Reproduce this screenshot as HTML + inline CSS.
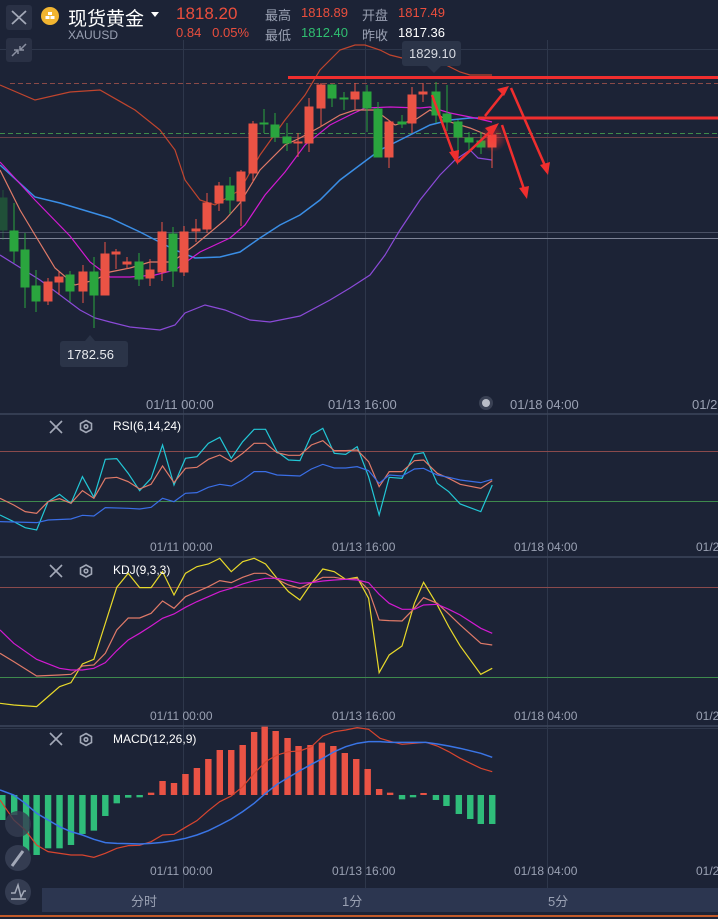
<!DOCTYPE html>
<html><head><meta charset="utf-8"><style>
*{margin:0;padding:0;box-sizing:border-box}
body{width:718px;height:919px;background:#1c2336;overflow:hidden;position:relative;font-family:"Liberation Sans","Noto Sans CJK SC",sans-serif;color:#fff}
.abs{position:absolute;white-space:nowrap}
.lbl{font-size:13px;color:#9aa1b3}
.gray{color:#9aa1b3}
.red{color:#ea4e3d}
.grn{color:#2fbf71}
</style></head><body>
<svg class="abs" style="left:0;top:0" width="718" height="919" viewBox="0 0 718 919">
<defs><radialGradient id="gl"><stop offset="0" stop-color="#ff3030" stop-opacity=".6"/><stop offset="1" stop-color="#ff3030" stop-opacity="0"/></radialGradient></defs>
<!-- grid -->
<g stroke="#2e374b" stroke-width="1">
<line x1="0" y1="49.5" x2="718" y2="49.5"/>
<line x1="183.5" y1="40" x2="183.5" y2="890"/>
<line x1="365.5" y1="40" x2="365.5" y2="890"/>
<line x1="547.5" y1="40" x2="547.5" y2="890"/>
<line x1="0" y1="728.5" x2="718" y2="728.5"/>
</g>
<g stroke="#3d465b" stroke-width="1.5">
<line x1="0" y1="414" x2="718" y2="414"/>
<line x1="0" y1="557" x2="718" y2="557"/>
<line x1="0" y1="726" x2="718" y2="726"/>
</g>
<!-- main horizontal lines -->
<line x1="10" y1="83.5" x2="718" y2="83.5" stroke="#8a4a48" stroke-dasharray="5,3"/>
<line x1="0" y1="133.5" x2="718" y2="133.5" stroke="#3f8a4b" stroke-dasharray="5,3"/>
<line x1="0" y1="137.5" x2="718" y2="137.5" stroke="#6b4048"/>
<line x1="0" y1="232.5" x2="718" y2="232.5" stroke="#4a5165"/>
<line x1="0" y1="238.5" x2="718" y2="238.5" stroke="#7d8396"/>
<!-- bands -->
<g fill="none" stroke-width="1.2">
<polyline stroke="#c0452e" points="0,85 35,100 70,92 100,90 135,110 160,130 175,150 185,180 200,200 215,205 240,190 260,155 285,120 305,95 320,70 340,50 355,45 365,45 380,50 390,55 410,60 440,62 460,72 470,75 492,75"/>
<polyline stroke="#8b4ad8" points="0,255 40,280 80,310 95,318 110,322 130,327 160,330 175,325 185,313 205,305 225,310 250,320 270,322 300,316 330,300 350,288 370,275 385,255 400,230 420,200 440,175 455,160 470,150 478,158 492,160"/>
<polyline stroke="#3a8ee6" stroke-width="1.5" points="0,165 35,197 60,203 90,212 110,218 140,232 175,250 195,258 220,257 240,252 260,238 280,225 300,215 320,200 340,180 360,165 380,150 400,140 430,125 450,120 470,118 492,118"/>
<polyline stroke="#d21ad2" points="0,162 35,200 70,236 90,262 110,277 130,277 155,275 175,270 200,252 230,238 245,225 265,195 285,172 305,145 330,125 350,115 365,108 390,107 420,108 430,107 450,113 475,118 492,122"/>
<polyline stroke="#e07a68" points="0,170 20,210 35,235 55,268 75,285 95,280 110,272 130,268 150,262 172,262 195,245 225,220 240,203 260,170 285,145 300,138 320,127 340,115 355,110 375,110 395,125 415,120 430,110 450,122 470,128 492,137"/>
</g>
<!-- candles -->
<g stroke-width="1">
<g stroke="#2aa53e" fill="#2aa53e" opacity=".35"><line x1="3" y1="190" x2="3" y2="240"/><rect x="-1" y="198" width="8" height="32"/></g>
<g stroke="#2aa53e" fill="#2aa53e">
<line x1="14" y1="203" x2="14" y2="263"/><rect x="10" y="231" width="8" height="20"/>
<line x1="25" y1="233" x2="25" y2="308"/><rect x="21" y="250" width="8" height="37"/>
<line x1="36" y1="270" x2="36" y2="312"/><rect x="32" y="286" width="8" height="15"/>
<line x1="70" y1="271" x2="70" y2="302"/><rect x="66" y="275" width="8" height="16"/>
<line x1="94" y1="257" x2="94" y2="328"/><rect x="90" y="272" width="8" height="23"/>
<line x1="139" y1="253" x2="139" y2="286"/><rect x="135" y="262" width="8" height="17"/>
<line x1="173" y1="227" x2="173" y2="287"/><rect x="169" y="234" width="8" height="37"/>
<line x1="230" y1="177" x2="230" y2="214"/><rect x="226" y="186" width="8" height="14"/>
<line x1="264" y1="109" x2="264" y2="133"/><rect x="260" y="123" width="8" height="1"/>
<line x1="275" y1="113" x2="275" y2="142"/><rect x="271" y="125" width="8" height="12"/>
<line x1="287" y1="123" x2="287" y2="151"/><rect x="283" y="137" width="8" height="6"/>
<line x1="332" y1="84" x2="332" y2="107"/><rect x="328" y="85" width="8" height="13"/>
<line x1="344" y1="92" x2="344" y2="110"/><rect x="340" y="98" width="8" height="1"/>
<line x1="367" y1="85" x2="367" y2="132"/><rect x="363" y="92" width="8" height="16"/>
<line x1="378" y1="102" x2="378" y2="157"/><rect x="374" y="109" width="8" height="48"/>
<line x1="402" y1="115" x2="402" y2="128"/><rect x="398" y="122" width="8" height="2"/>
<line x1="436" y1="82" x2="436" y2="123"/><rect x="432" y="92" width="8" height="23"/>
<line x1="447" y1="85" x2="447" y2="131"/><rect x="443" y="114" width="8" height="8"/>
<line x1="458" y1="120" x2="458" y2="163"/><rect x="454" y="122" width="8" height="15"/>
<line x1="469" y1="132" x2="469" y2="150"/><rect x="465" y="138" width="8" height="4"/>
<line x1="481" y1="132" x2="481" y2="154"/><rect x="477" y="141" width="8" height="6"/>
</g>
<g stroke="#ea5345" fill="#ea5345">
<line x1="48" y1="278" x2="48" y2="305"/><rect x="44" y="282" width="8" height="19"/>
<line x1="59" y1="272" x2="59" y2="295"/><rect x="55" y="277" width="8" height="5"/>
<line x1="83" y1="265" x2="83" y2="303"/><rect x="79" y="272" width="8" height="19"/>
<line x1="105" y1="242" x2="105" y2="295"/><rect x="101" y="254" width="8" height="41"/>
<line x1="116" y1="249" x2="116" y2="269"/><rect x="112" y="252" width="8" height="2"/>
<line x1="127" y1="257" x2="127" y2="269"/><rect x="123" y="262" width="8" height="2"/>
<line x1="150" y1="259" x2="150" y2="286"/><rect x="146" y="270" width="8" height="8"/>
<line x1="162" y1="222" x2="162" y2="281"/><rect x="158" y="232" width="8" height="40"/>
<line x1="184" y1="226" x2="184" y2="276"/><rect x="180" y="232" width="8" height="40"/>
<line x1="196" y1="219" x2="196" y2="242"/><rect x="192" y="229" width="8" height="2"/>
<line x1="207" y1="193" x2="207" y2="233"/><rect x="203" y="203" width="8" height="26"/>
<line x1="219" y1="182" x2="219" y2="211"/><rect x="215" y="186" width="8" height="17"/>
<line x1="241" y1="170" x2="241" y2="226"/><rect x="237" y="172" width="8" height="29"/>
<line x1="253" y1="121" x2="253" y2="182"/><rect x="249" y="124" width="8" height="49"/>
<line x1="298" y1="133" x2="298" y2="157"/><rect x="294" y="142" width="8" height="1"/>
<line x1="309" y1="98" x2="309" y2="152"/><rect x="305" y="107" width="8" height="36"/>
<line x1="321" y1="83" x2="321" y2="127"/><rect x="317" y="85" width="8" height="23"/>
<line x1="355" y1="83" x2="355" y2="109"/><rect x="351" y="92" width="8" height="7"/>
<line x1="389" y1="120" x2="389" y2="168"/><rect x="385" y="122" width="8" height="35"/>
<line x1="412" y1="87" x2="412" y2="133"/><rect x="408" y="95" width="8" height="28"/>
<line x1="423" y1="83" x2="423" y2="102"/><rect x="419" y="92" width="8" height="2"/>
<line x1="492" y1="130" x2="492" y2="168"/><rect x="488" y="135" width="8" height="12"/>
</g>
</g>
<circle cx="493" cy="138" r="14" fill="url(#gl)"/>
<!-- red drawings -->
<g stroke="#f02e2e" fill="#f02e2e">
<rect x="288" y="76" width="430" height="3" stroke="none"/>
<rect x="478" y="116.5" width="240" height="3" stroke="none"/>
<g stroke-width="2.5" fill="none">
<line x1="432" y1="95" x2="455" y2="158"/>
<line x1="458" y1="162" x2="494" y2="128"/>
<line x1="485" y1="116" x2="505" y2="91"/>
<line x1="511" y1="88" x2="546" y2="168"/>
<line x1="502" y1="125" x2="525" y2="192"/>
</g>
<polygon points="458,165 449,152 459,150" stroke="none"/>
<polygon points="499,123 485,128 492,136" stroke="none"/>
<polygon points="509,86 497,89 504,96" stroke="none"/>
<polygon points="548,175 540,165 550,162" stroke="none"/>
<polygon points="527,199 519,188 529,186" stroke="none"/>
</g>
<!-- tooltips -->
<rect x="402" y="41" width="59" height="25" rx="3" fill="#2b3448"/>
<polygon points="427,66 441,66 434,73" fill="#2b3448"/>
<rect x="60" y="341" width="68" height="26" rx="3" fill="#2b3448"/>
<polygon points="85,341 95,341 90,335" fill="#2b3448"/>
<circle cx="486" cy="403" r="7" fill="#3a4154"/><circle cx="486" cy="403" r="4" fill="#b9bdc7"/>

<!-- RSI -->
<line x1="0" y1="451.5" x2="718" y2="451.5" stroke="#8a4a4c"/>
<line x1="0" y1="501.5" x2="718" y2="501.5" stroke="#3e8a4d"/>
<g transform="translate(0,390) scale(0.4579,0.3333)" fill="none" stroke-width="1.2">
<polyline vector-effect="non-scaling-stroke" stroke="#22c7d6" points="0,375 30,395 55,413 80,420 105,335 130,313 155,340 180,260 205,322 230,208 255,206 280,250 305,302 330,265 355,165 380,285 405,205 430,200 455,160 480,142 505,205 530,155 555,118 580,118 605,185 630,210 655,212 680,135 705,115 730,190 755,193 780,170 805,260 828,375 850,262 878,265 905,193 925,188 955,280 980,305 1005,342 1050,365 1075,285"/>
<polyline vector-effect="non-scaling-stroke" stroke="#e07a68" points="0,325 30,345 55,365 80,370 105,335 130,326 155,340 180,302 205,325 230,265 255,262 280,275 305,297 330,283 355,228 380,278 405,235 430,232 455,208 480,195 505,215 530,190 555,160 580,160 605,188 630,196 655,196 680,165 705,152 730,182 755,182 780,180 805,215 828,290 850,245 878,245 905,212 925,210 955,250 980,265 1005,283 1050,295 1075,272"/>
<polyline vector-effect="non-scaling-stroke" stroke="#3a6ee6" points="0,395 80,398 105,390 155,387 180,376 205,378 230,353 280,355 305,357 330,352 355,325 380,335 405,310 430,308 455,292 480,283 505,288 530,270 555,245 580,245 605,255 655,258 680,237 705,223 730,234 755,234 780,230 805,242 828,280 850,255 878,258 905,237 925,235 955,255 980,262 1005,270 1050,278 1075,268"/>
</g>
<!-- KDJ -->
<line x1="0" y1="587.5" x2="718" y2="587.5" stroke="#8a4a4c"/>
<line x1="0" y1="677.5" x2="718" y2="677.5" stroke="#3e8a4d"/>
<g transform="translate(0,390) scale(0.4579,0.3333)" fill="none" stroke-width="1.2">
<polyline vector-effect="non-scaling-stroke" stroke="#e8d92a" points="0,940 30,945 80,950 105,920 130,890 155,878 180,822 205,808 230,700 255,592 280,550 305,593 330,593 355,545 380,615 405,550 430,530 455,522 480,505 505,545 530,515 555,505 580,522 605,565 630,605 655,630 680,580 705,537 730,545 755,568 780,562 805,625 828,848 850,795 878,768 905,640 925,577 955,645 980,710 1005,768 1050,853 1075,835"/>
<polyline vector-effect="non-scaling-stroke" stroke="#e07a68" points="0,790 30,815 80,858 130,855 155,853 180,828 205,825 230,790 255,720 280,684 305,684 330,670 355,633 380,655 405,620 430,605 455,590 480,572 505,578 530,562 555,550 580,550 605,568 630,585 655,595 680,578 705,562 730,562 755,568 780,565 805,600 828,690 850,692 878,693 905,655 925,623 955,640 980,672 1005,705 1050,760 1075,765"/>
<polyline vector-effect="non-scaling-stroke" stroke="#d21ad2" points="0,720 30,760 80,808 130,835 155,840 180,840 205,835 230,818 255,782 280,750 305,730 330,708 355,685 380,672 405,652 430,635 455,620 480,605 505,595 530,582 555,572 580,565 605,565 630,572 655,580 680,578 705,573 730,570 755,568 780,570 805,578 828,613 850,640 878,658 905,658 925,645 955,643 980,658 1005,675 1050,715 1075,730"/>
</g>
<!-- MACD -->
<g transform="translate(0,720) scale(0.4579,0.3333)">
<g fill="#2fbd7a">
<rect x="-6" y="225" width="18" height="75"/><rect x="24" y="225" width="14" height="60"/>
<rect x="50" y="225" width="14" height="185"/><rect x="73" y="225" width="14" height="180"/>
<rect x="98" y="225" width="14" height="160"/><rect x="123" y="225" width="14" height="160"/>
<rect x="148" y="225" width="14" height="150"/><rect x="173" y="225" width="14" height="117"/>
<rect x="198" y="225" width="14" height="107"/><rect x="223" y="225" width="14" height="63"/>
<rect x="248" y="225" width="14" height="25"/><rect x="273" y="225" width="14" height="8"/>
<rect x="298" y="225" width="14" height="7"/>
<rect x="871" y="225" width="14" height="13"/><rect x="895" y="225" width="14" height="7"/>
<rect x="945" y="225" width="14" height="15"/><rect x="968" y="225" width="14" height="33"/>
<rect x="995" y="225" width="14" height="57"/><rect x="1020" y="225" width="14" height="72"/>
<rect x="1043" y="225" width="14" height="87"/><rect x="1068" y="225" width="14" height="87"/>
</g>
<g fill="#ea5345">
<rect x="323" y="218" width="14" height="7"/><rect x="348" y="183" width="14" height="42"/>
<rect x="373" y="189" width="14" height="36"/><rect x="398" y="162" width="14" height="63"/>
<rect x="423" y="144" width="14" height="81"/><rect x="448" y="117" width="14" height="108"/>
<rect x="473" y="90" width="14" height="135"/><rect x="498" y="90" width="14" height="135"/>
<rect x="523" y="75" width="14" height="150"/><rect x="548" y="36" width="14" height="189"/>
<rect x="571" y="20" width="14" height="205"/><rect x="595" y="33" width="14" height="192"/>
<rect x="621" y="54" width="14" height="171"/><rect x="645" y="78" width="14" height="147"/>
<rect x="671" y="75" width="14" height="150"/><rect x="696" y="68" width="14" height="157"/>
<rect x="721" y="78" width="14" height="147"/><rect x="746" y="99" width="14" height="126"/>
<rect x="771" y="117" width="14" height="108"/><rect x="796" y="147" width="14" height="78"/>
<rect x="821" y="207" width="14" height="18"/><rect x="845" y="218" width="14" height="7"/>
<rect x="918" y="219" width="14" height="6"/>
</g>
<g fill="none" stroke-width="1.2">
<polyline vector-effect="non-scaling-stroke" stroke="#d8452f" points="0,240 30,300 55,330 80,375 105,395 155,405 180,405 205,412 230,400 255,385 280,377 305,376 330,365 355,345 380,343 405,322 430,302 455,272 480,245 505,228 530,200 555,160 580,125 605,105 630,95 655,93 680,80 705,48 730,35 755,30 780,23 805,28 830,55 855,65 878,73 905,70 930,67 955,78 980,95 1005,115 1050,145 1075,155"/>
<polyline vector-effect="non-scaling-stroke" stroke="#3a75e6" stroke-width="1.5" points="0,210 30,225 55,250 80,280 105,300 130,320 155,335 180,345 205,358 230,368 255,370 280,371 305,372 330,370 355,367 380,362 405,355 430,345 455,332 480,315 505,297 530,275 555,250 580,220 605,193 630,172 655,152 680,133 705,115 730,95 755,80 780,70 805,65 830,65 855,67 905,67 930,67 955,72 980,78 1005,85 1050,100 1075,112"/>
</g>
</g>
<!-- panel header icons -->
<g stroke="#a3a9b8" stroke-width="1.6" fill="none">
<path d="M50,421 L62,433 M62,421 L50,433"/>
<path d="M50,565 L62,577 M62,565 L50,577"/>
<path d="M50,733 L62,745 M62,733 L50,745"/>
<polygon points="86,420.5 91.5,423.5 91.5,429.5 86,432.5 80.5,429.5 80.5,423.5"/><circle cx="86" cy="426.5" r="1.8"/>
<polygon points="86,565 91.5,568 91.5,574 86,577 80.5,574 80.5,568"/><circle cx="86" cy="571" r="1.8"/>
<polygon points="86,733.5 91.5,736.5 91.5,742.5 86,745.5 80.5,742.5 80.5,736.5"/><circle cx="86" cy="739.5" r="1.8"/>
</g>
<!-- left buttons -->
<rect x="6" y="5" width="26" height="25" rx="3" fill="#2a3145"/>
<path d="M12,11 L26,24 M26,11 L12,24" stroke="#a3a9b8" stroke-width="1.8"/>
<rect x="6" y="38" width="26" height="24" rx="3" fill="#2a3145"/>
<path d="M12,56 L18,50 M14,50 L18,50 L18,54 M26,44 L20,50 M20,46 L20,50 L24,50" stroke="#8b91a2" stroke-width="1.5" fill="none"/>
<circle cx="18" cy="824" r="13" fill="#343c51" opacity=".8"/>
<circle cx="18" cy="858" r="13" fill="#343c51"/>
<path d="M12,866 L23,851" stroke="#a3a9b8" stroke-width="3"/>
<circle cx="18" cy="892" r="13" fill="#343c51"/>
<path d="M11,893 L15,893 L18,885 L21,897 L24,891 L26,891 M11,899 L26,899" stroke="#a3a9b8" stroke-width="1.5" fill="none"/>
<!-- bottom tabs -->
<rect x="42" y="888" width="676" height="24" fill="#2c3650"/>
<rect x="0" y="915" width="718" height="2" fill="#c25a2a"/>
<!-- gold icon -->
<circle cx="50" cy="16" r="9" fill="#f2b531"/>
<rect x="45.5" y="16" width="4" height="3" fill="#fff"/><rect x="50.5" y="16" width="4" height="3" fill="#fff"/><rect x="48" y="12" width="4" height="3" fill="#fff"/>
<polygon points="151,12 159,12 155,17" fill="#fff"/>
</svg>

<div class="abs" style="left:68px;top:4px;font-size:19px;color:#fff">现货黄金</div>
<div class="abs gray" style="left:68px;top:28px;font-size:12px">XAUUSD</div>
<div class="abs red" style="left:176px;top:4px;font-size:17px">1818.20</div>
<div class="abs red" style="left:176px;top:25px;font-size:13px">0.84&nbsp;&nbsp;&nbsp;0.05%</div>
<div class="abs gray" style="left:265px;top:5px;font-size:13px">最高</div>
<div class="abs red" style="left:301px;top:5px;font-size:13px">1818.89</div>
<div class="abs gray" style="left:362px;top:5px;font-size:13px">开盘</div>
<div class="abs red" style="left:398px;top:5px;font-size:13px">1817.49</div>
<div class="abs gray" style="left:265px;top:25px;font-size:13px">最低</div>
<div class="abs grn" style="left:301px;top:25px;font-size:13px">1812.40</div>
<div class="abs gray" style="left:362px;top:25px;font-size:13px">昨收</div>
<div class="abs" style="left:398px;top:25px;font-size:13px">1817.36</div>
<div class="abs" style="left:409px;top:46px;font-size:13px;color:#d8dbe2">1829.10</div>
<div class="abs" style="left:67px;top:347px;font-size:13px;color:#e8eaee">1782.56</div>

<div class="abs lbl" style="left:146px;top:397px">01/11 00:00</div>
<div class="abs lbl" style="left:328px;top:397px">01/13 16:00</div>
<div class="abs lbl" style="left:510px;top:397px">01/18 04:00</div>
<div class="abs lbl" style="left:692px;top:397px">01/2</div>

<div class="abs" style="left:113px;top:419px;font-size:12px">RSI(6,14,24)</div>
<div class="abs lbl" style="left:150px;top:540px;font-size:12px">01/11 00:00</div>
<div class="abs lbl" style="left:332px;top:540px;font-size:12px">01/13 16:00</div>
<div class="abs lbl" style="left:514px;top:540px;font-size:12px">01/18 04:00</div>
<div class="abs lbl" style="left:696px;top:540px;font-size:12px">01/2</div>

<div class="abs" style="left:113px;top:563px;font-size:12px">KDJ(9,3,3)</div>
<div class="abs lbl" style="left:150px;top:709px;font-size:12px">01/11 00:00</div>
<div class="abs lbl" style="left:332px;top:709px;font-size:12px">01/13 16:00</div>
<div class="abs lbl" style="left:514px;top:709px;font-size:12px">01/18 04:00</div>
<div class="abs lbl" style="left:696px;top:709px;font-size:12px">01/2</div>

<div class="abs" style="left:113px;top:732px;font-size:12px">MACD(12,26,9)</div>
<div class="abs lbl" style="left:150px;top:864px;font-size:12px">01/11 00:00</div>
<div class="abs lbl" style="left:332px;top:864px;font-size:12px">01/13 16:00</div>
<div class="abs lbl" style="left:514px;top:864px;font-size:12px">01/18 04:00</div>
<div class="abs lbl" style="left:696px;top:864px;font-size:12px">01/2</div>

<div class="abs lbl" style="left:131px;top:891px">分时</div>
<div class="abs lbl" style="left:342px;top:891px">1分</div>
<div class="abs lbl" style="left:548px;top:891px">5分</div>
</body></html>
